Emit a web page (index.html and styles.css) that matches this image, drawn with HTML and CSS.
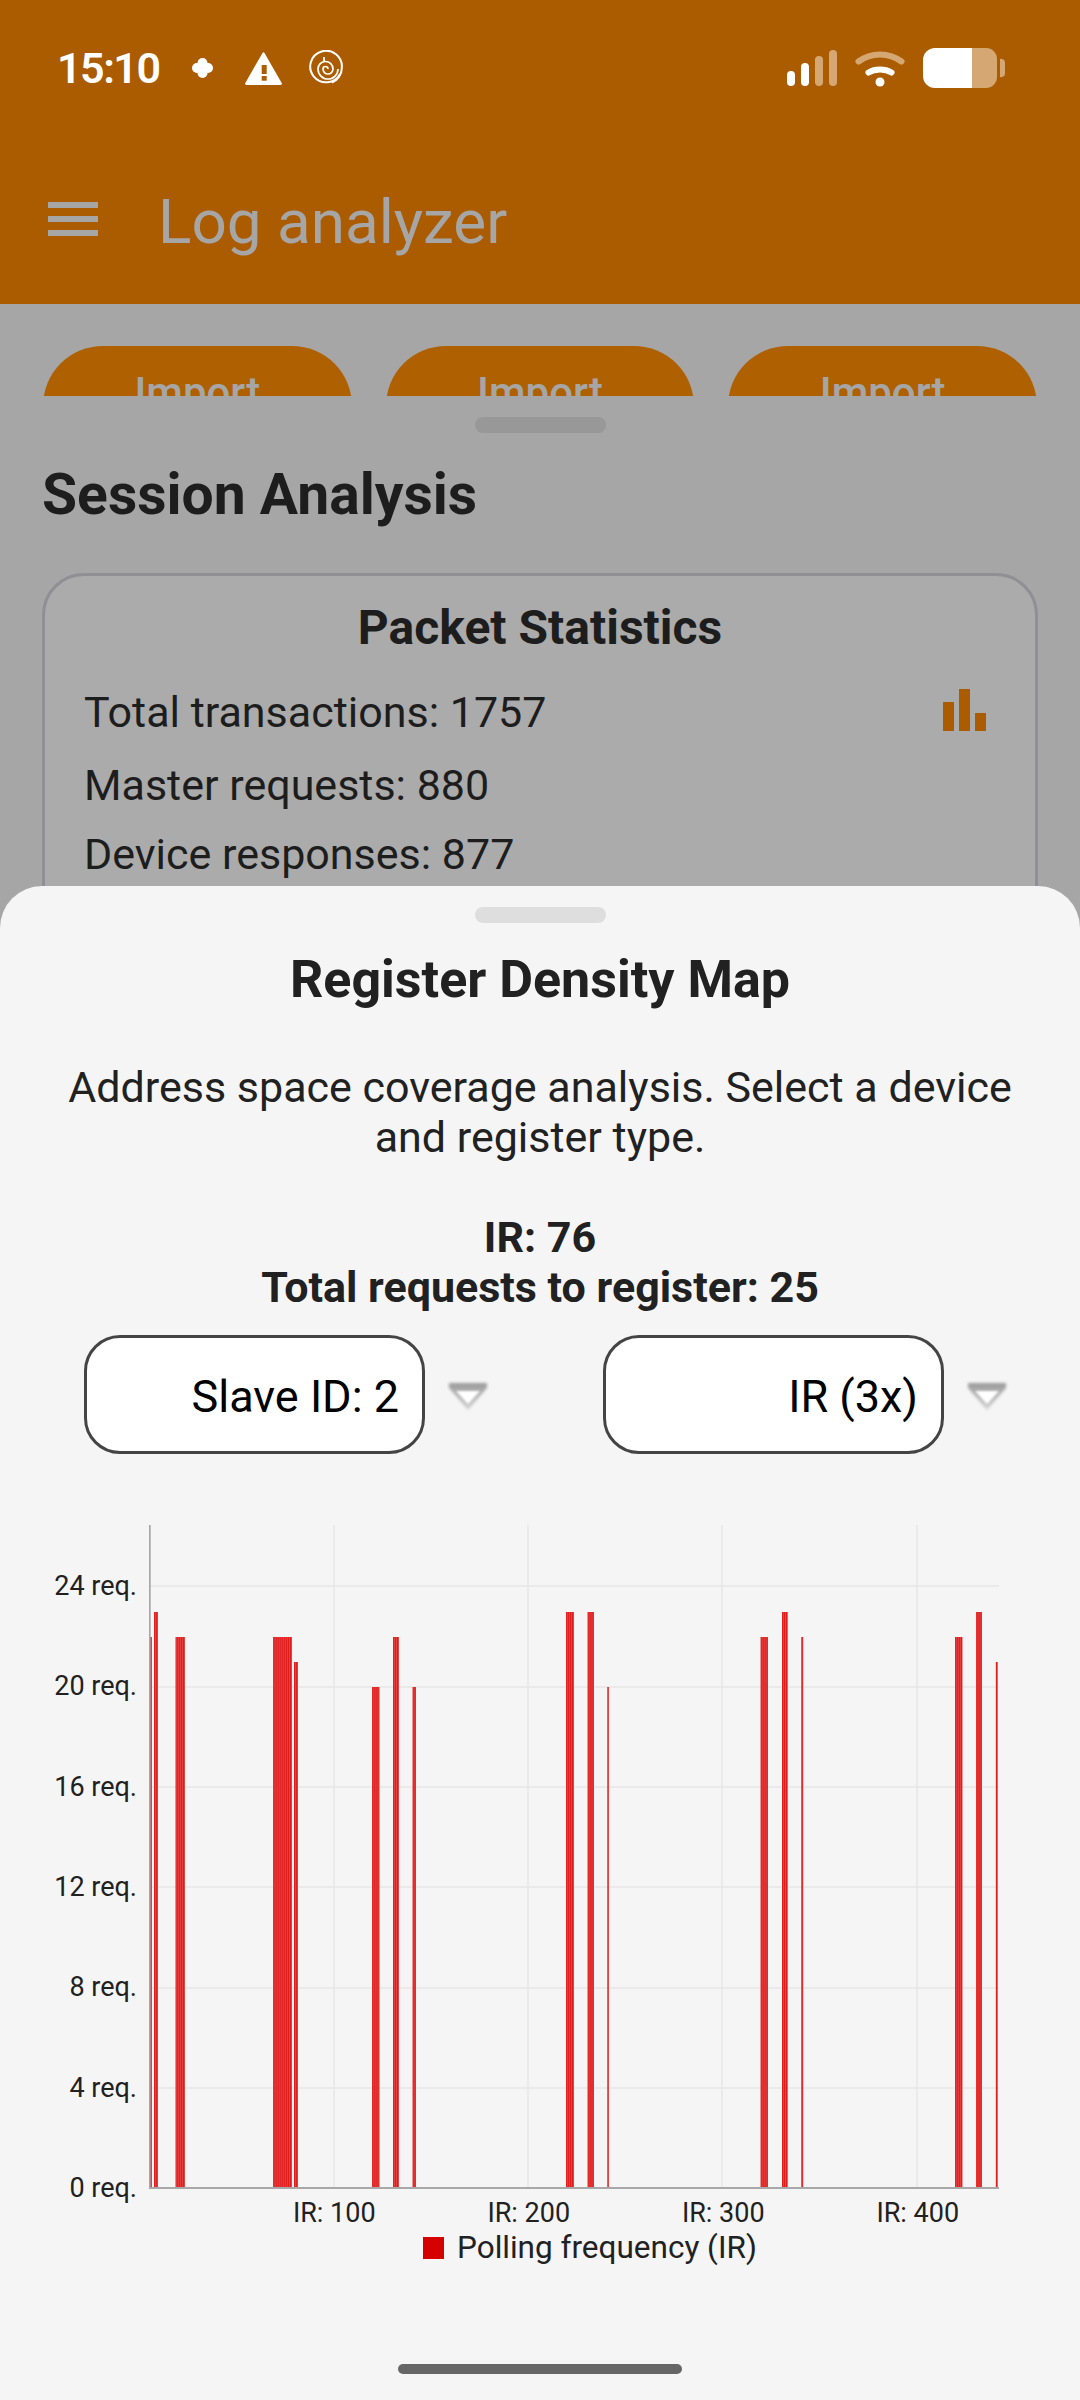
FILE: index.html
```html
<!DOCTYPE html>
<html lang="en">
<head>
<meta charset="utf-8">
<title>Log analyzer</title>
<link rel="stylesheet" href="styles.css">
</head>
<body>
<div class="screen">
  <header class="appbar">
    <div class="status">
      <span class="time">15:10</span>
      <svg class="ic-clover" viewBox="0 0 21 20" fill="#fff"><circle cx="10.500" cy="5" r="5"/><circle cx="10.500" cy="15" r="5"/><circle cx="5" cy="10" r="5"/><circle cx="16" cy="10" r="5"/></svg>
      <svg class="ic-warn" viewBox="0 0 37 33"><path d="M17.500 1a1.200 1.200 0 0 1 2 0L36.700 31a1.200 1.200 0 0 1-1 1.900H1.300a1.200 1.200 0 0 1-1-1.900z" fill="#fff"/><rect x="16.700" y="13" width="5" height="9" fill="#ab5c00"/><rect x="16.700" y="24" width="5" height="4.700" fill="#ab5c00"/></svg>
      <svg class="ic-swirl" viewBox="0 0 36 36" fill="none" stroke="#fff"><path stroke-width="2" d="M32 24A15.800 15.800 0 1 1 33.800 18 15.800 15.800 0 0 1 24 32.600"/><path stroke-width="1.700" d="M20 19A2.500 2.500 0 0 0 15 19 5 5 0 0 0 25 19 7.500 7.500 0 0 0 10 19 10 10 0 0 0 30 19M16 7V11"/></svg>
      <span class="status-space"></span>
      <svg class="ic-signal" viewBox="0 0 50 36"><rect x="0" y="21" width="8" height="15" rx="4" fill="#fff"/><rect x="14" y="13" width="8" height="23" rx="4" fill="#fff"/><rect x="28" y="6" width="8" height="30" rx="4" fill="#d5a873"/><rect x="42" y="0" width="8" height="36" rx="4" fill="#d5a873"/></svg>
      <svg class="ic-wifi" viewBox="0 0 50 37" fill="none" stroke-linecap="round"><path d="M3.500 11.500C16 2 34 2 46.500 11.500" stroke="#d5a873" stroke-width="6"/><path d="M13.500 22.500C20 18.500 30 18.500 36.500 22.500" stroke="#fff" stroke-width="6"/><circle cx="25" cy="32" r="4.500" fill="#fff"/></svg>
      <svg class="ic-batt" viewBox="0 0 82 40"><path d="M12 0h37v40H12A12 12 0 0 1 0 28V12A12 12 0 0 1 12 0z" fill="#fff"/><path d="M49 0h14a11 11 0 0 1 11 11v18a11 11 0 0 1-11 11H49z" fill="#d5a873"/><path d="M77 11a4 4 0 0 1 5 3v12a4 4 0 0 1-5 3z" fill="#d5a873"/></svg>
    </div>
    <div class="toolbar">
      <span class="menu"><i></i><i></i><i></i></span>
      <span class="apptitle">Log analyzer</span>
    </div>
  </header>

  <div class="imports">
    <div class="import"><span>Import</span></div>
    <div class="import"><span>Import</span></div>
    <div class="import"><span>Import</span></div>
  </div>

  <section class="behind">
    <div class="handle handle-dim"></div>
    <h2 class="session">Session Analysis</h2>
    <div class="card">
      <h3 class="card-title">Packet Statistics</h3>
      <div class="stat-row">
        <p class="stat stat-first">Total transactions: 1757</p>
        <svg class="ic-bars" viewBox="0 0 43 42"><rect x="0" y="13" width="11" height="29"/><rect x="16" y="0" width="11" height="42"/><rect x="32" y="24" width="11" height="18"/></svg>
      </div>
      <p class="stat stat-second">Master requests: 880</p>
      <p class="stat stat-third">Device responses: 877</p>
    </div>
  </section>

  <section class="sheet">
    <div class="handle handle-light"></div>
    <h2 class="sheet-title">Register Density Map</h2>
    <p class="desc">Address space coverage analysis. Select a device<br>and register type.</p>
    <p class="reg">IR: 76<br>Total requests to register: 25</p>
    <div class="dropdowns">
      <div class="dd-group">
        <div class="dd">Slave ID: 2</div>
        <svg class="dd-arrow" viewBox="0 0 46 34"><defs><linearGradient id="ag" x1="0" y1="0" x2="0" y2="1"><stop offset="0" stop-color="#999"/><stop offset=".4" stop-color="#b4b4b4"/><stop offset="1" stop-color="#d4d4d4"/></linearGradient><filter id="blur1" x="-20%" y="-20%" width="140%" height="140%"><feGaussianBlur stdDeviation="1.400"/></filter><filter id="blur2" x="-20%" y="-20%" width="140%" height="140%"><feGaussianBlur stdDeviation=".8"/></filter></defs><path d="M4 4H42V9L23 31 4 9z" fill="url(#ag)" filter="url(#blur1)"/><path d="M11 12H35L23 25z" fill="#fff" filter="url(#blur2)"/></svg>
      </div>
      <div class="dd-group">
        <div class="dd">IR (3x)</div>
        <svg class="dd-arrow" viewBox="0 0 46 34"><path d="M4 4H42V9L23 31 4 9z" fill="url(#ag)" filter="url(#blur1)"/><path d="M11 12H35L23 25z" fill="#fff" filter="url(#blur2)"/></svg>
      </div>
    </div>
    <div class="chart">
      <div class="y-labels">
        <span>24 req.</span><span>20 req.</span><span>16 req.</span><span>12 req.</span><span>8 req.</span><span>4 req.</span><span>0 req.</span>
      </div>
      <svg class="plot" viewBox="149 1525 851 665">
        <defs>
          <pattern id="stripes" patternUnits="userSpaceOnUse" x="150" y="0" width="1.945" height="10">
            <rect x="0" y="0" width="1.945" height="10" fill="#ec6060"/>
            <rect x="0.2" y="0" width="1.1" height="10" fill="#dc0808"/>
          </pattern>
        </defs>
        <g class="grid">
          <path d="M150 1586H999M150 1687H999M150 1787H999M150 1887H999M150 1988H999M150 2088H999"/>
          <path d="M334 1525V2188M528 1525V2188M722 1525V2188M917 1525V2188"/>
        </g>
        <g fill="url(#stripes)">
          <rect x="150" y="1637" width="2" height="551"/>
          <rect x="154" y="1612" width="4" height="576"/>
          <rect x="175.500" y="1637" width="9.500" height="551"/>
          <rect x="273" y="1637" width="19" height="551"/>
          <rect x="294" y="1662" width="4" height="526"/>
          <rect x="372" y="1687" width="7.500" height="501"/>
          <rect x="393" y="1637" width="6" height="551"/>
          <rect x="412.500" y="1687" width="3.500" height="501"/>
          <rect x="566" y="1612" width="8" height="576"/>
          <rect x="587.500" y="1612" width="6.500" height="576"/>
          <rect x="607.300" y="1687" width="1.700" height="501"/>
          <rect x="760.500" y="1637" width="7.500" height="551"/>
          <rect x="782" y="1612" width="5.800" height="576"/>
          <rect x="801.200" y="1637" width="2" height="551"/>
          <rect x="955" y="1637" width="7.500" height="551"/>
          <rect x="976" y="1612" width="6" height="576"/>
          <rect x="995.800" y="1662" width="2" height="526"/>
        </g>
        <path class="axis" d="M149.700 1525V2188H999"/>
      </svg>
    </div>
    <div class="x-labels"><span>IR: 100</span><span>IR: 200</span><span>IR: 300</span><span>IR: 400</span></div>
    <div class="legend"><i></i><span>Polling frequency (IR)</span></div>
    <div class="home"></div>
  </section>
</div>
</body>
</html>
```
FILE: styles.css
```css
* { box-sizing: border-box; }
html, body { margin: 0; padding: 0; }
body { font-family: Roboto, "Liberation Sans", sans-serif; background: #a6a6a6; }
h2, h3, p { margin: 0; }
i { display: block; }

.screen { width: 1080px; height: 2400px; overflow: hidden; background: #a6a6a6; color: #1d1d1d; }

.appbar { height: 304px; background: #ab5c00; }
.status { height: 136px; display: flex; align-items: center; padding-left: 57px; padding-right: 75px; }
.time { font-size: 43px; font-weight: 600; color: #fff; width: 135px; letter-spacing: -1.5px; }
.ic-clover { width: 21px; height: 20px; margin-right: 32px; }
.ic-warn { width: 37px; height: 33px; margin-right: 26px; }
.ic-swirl { width: 36px; height: 36px; }
.status-space { flex: 1; }
.ic-signal { width: 50px; height: 36px; margin-right: 18px; }
.ic-wifi { width: 50px; height: 37px; margin-right: 18px; }
.ic-batt { width: 82px; height: 40px; }

.toolbar { height: 168px; display: flex; align-items: center; padding-left: 48px; }
.menu { width: 50px; display: flex; flex-direction: column; gap: 8px; margin: 0 60px 2px 0; }
.menu i { height: 6px; background: #a6a6a6; }
.apptitle { font-size: 62px; color: #a6a6a6; padding-top: 2px; }

.imports { height: 92px; overflow: hidden; display: flex; gap: 34px; padding: 42px 43px 0; }
.import { flex: 1; height: 120px; border-radius: 60px; background: #af6000; color: #a6a6a6; text-align: center; font-size: 42px; font-weight: 500; line-height: 94px; }

.behind { height: 530px; overflow: hidden; padding-top: 21px; background: #a6a6a6; }
.handle { width: 131px; height: 16px; border-radius: 8px; margin: 0 auto; }
.handle-dim { background: #989898; }
.handle-light { background: #dedede; }
.session { font-size: 57px; font-weight: 700; line-height: 64px; margin: 30px 0 0 42px; }
.card { margin: 46px 42px 0; height: 400px; border: 3px solid #8f8f94; border-radius: 42px; background: #ababab; padding: 0 39px; }
.card-title { font-size: 48px; font-weight: 700; line-height: 54px; text-align: center; margin-top: 25px; }
.stat-row { display: flex; justify-content: space-between; align-items: flex-start; }
.stat { font-size: 43px; line-height: 50px; }
.stat-first { margin-top: 32px; }
.stat-second { margin-top: 23px; }
.stat-third { margin-top: 19px; }
.ic-bars { width: 43px; height: 42px; margin-top: 34px; margin-right: 10px; fill: #ab5c00; }

.sheet { position: relative; height: 1514px; margin-top: -40px; padding-top: 21px; background: #f5f5f5; border-radius: 42px 42px 0 0; color: #212121; }
.sheet-title { font-size: 52px; font-weight: 700; line-height: 60px; text-align: center; margin-top: 27px; }
.desc { font-size: 43px; line-height: 50px; text-align: center; margin-top: 52px; }
.reg { font-size: 43px; font-weight: 700; line-height: 50px; text-align: center; margin-top: 50px; }

.dropdowns { display: grid; grid-template-columns: 519px 1fr; padding-left: 84px; margin-top: 23px; }
.dd-group { display: flex; align-items: center; gap: 20px; }
.dd { width: 341px; height: 119px; border: 3px solid #444; border-radius: 36px; background: #fff; color: #000; font-size: 45px; padding-top: 3px; display: flex; align-items: center; justify-content: flex-end; padding-right: 23px; }
.dd-arrow { width: 46px; height: 34px; margin-top: 2px; }

.chart { display: flex; margin-top: 71px; height: 665px; }
.y-labels { width: 149px; height: 679px; padding: 45px 12px 0 0; display: flex; flex-direction: column; justify-content: space-between; align-items: flex-end; font-size: 27px; line-height: 32px; }
.plot { width: 851px; height: 665px; display: block; }
.grid path { fill: none; stroke: #e6e6e6; stroke-width: 1.5; }
.axis { fill: none; stroke: #a8a8a8; stroke-width: 2; }

.x-labels { display: grid; grid-template-columns: repeat(4, 194.5px); padding-left: 237px; margin-top: 7px; font-size: 27px; line-height: 32px; text-align: center; }
.legend { display: flex; align-items: center; gap: 13px; padding-left: 423px; font-size: 31.5px; line-height: 38px; }
.legend i { width: 21px; height: 22px; background: #d50000; }
.home { width: 284px; height: 10px; border-radius: 5px; background: #666; margin: 97px auto 0; }
```
